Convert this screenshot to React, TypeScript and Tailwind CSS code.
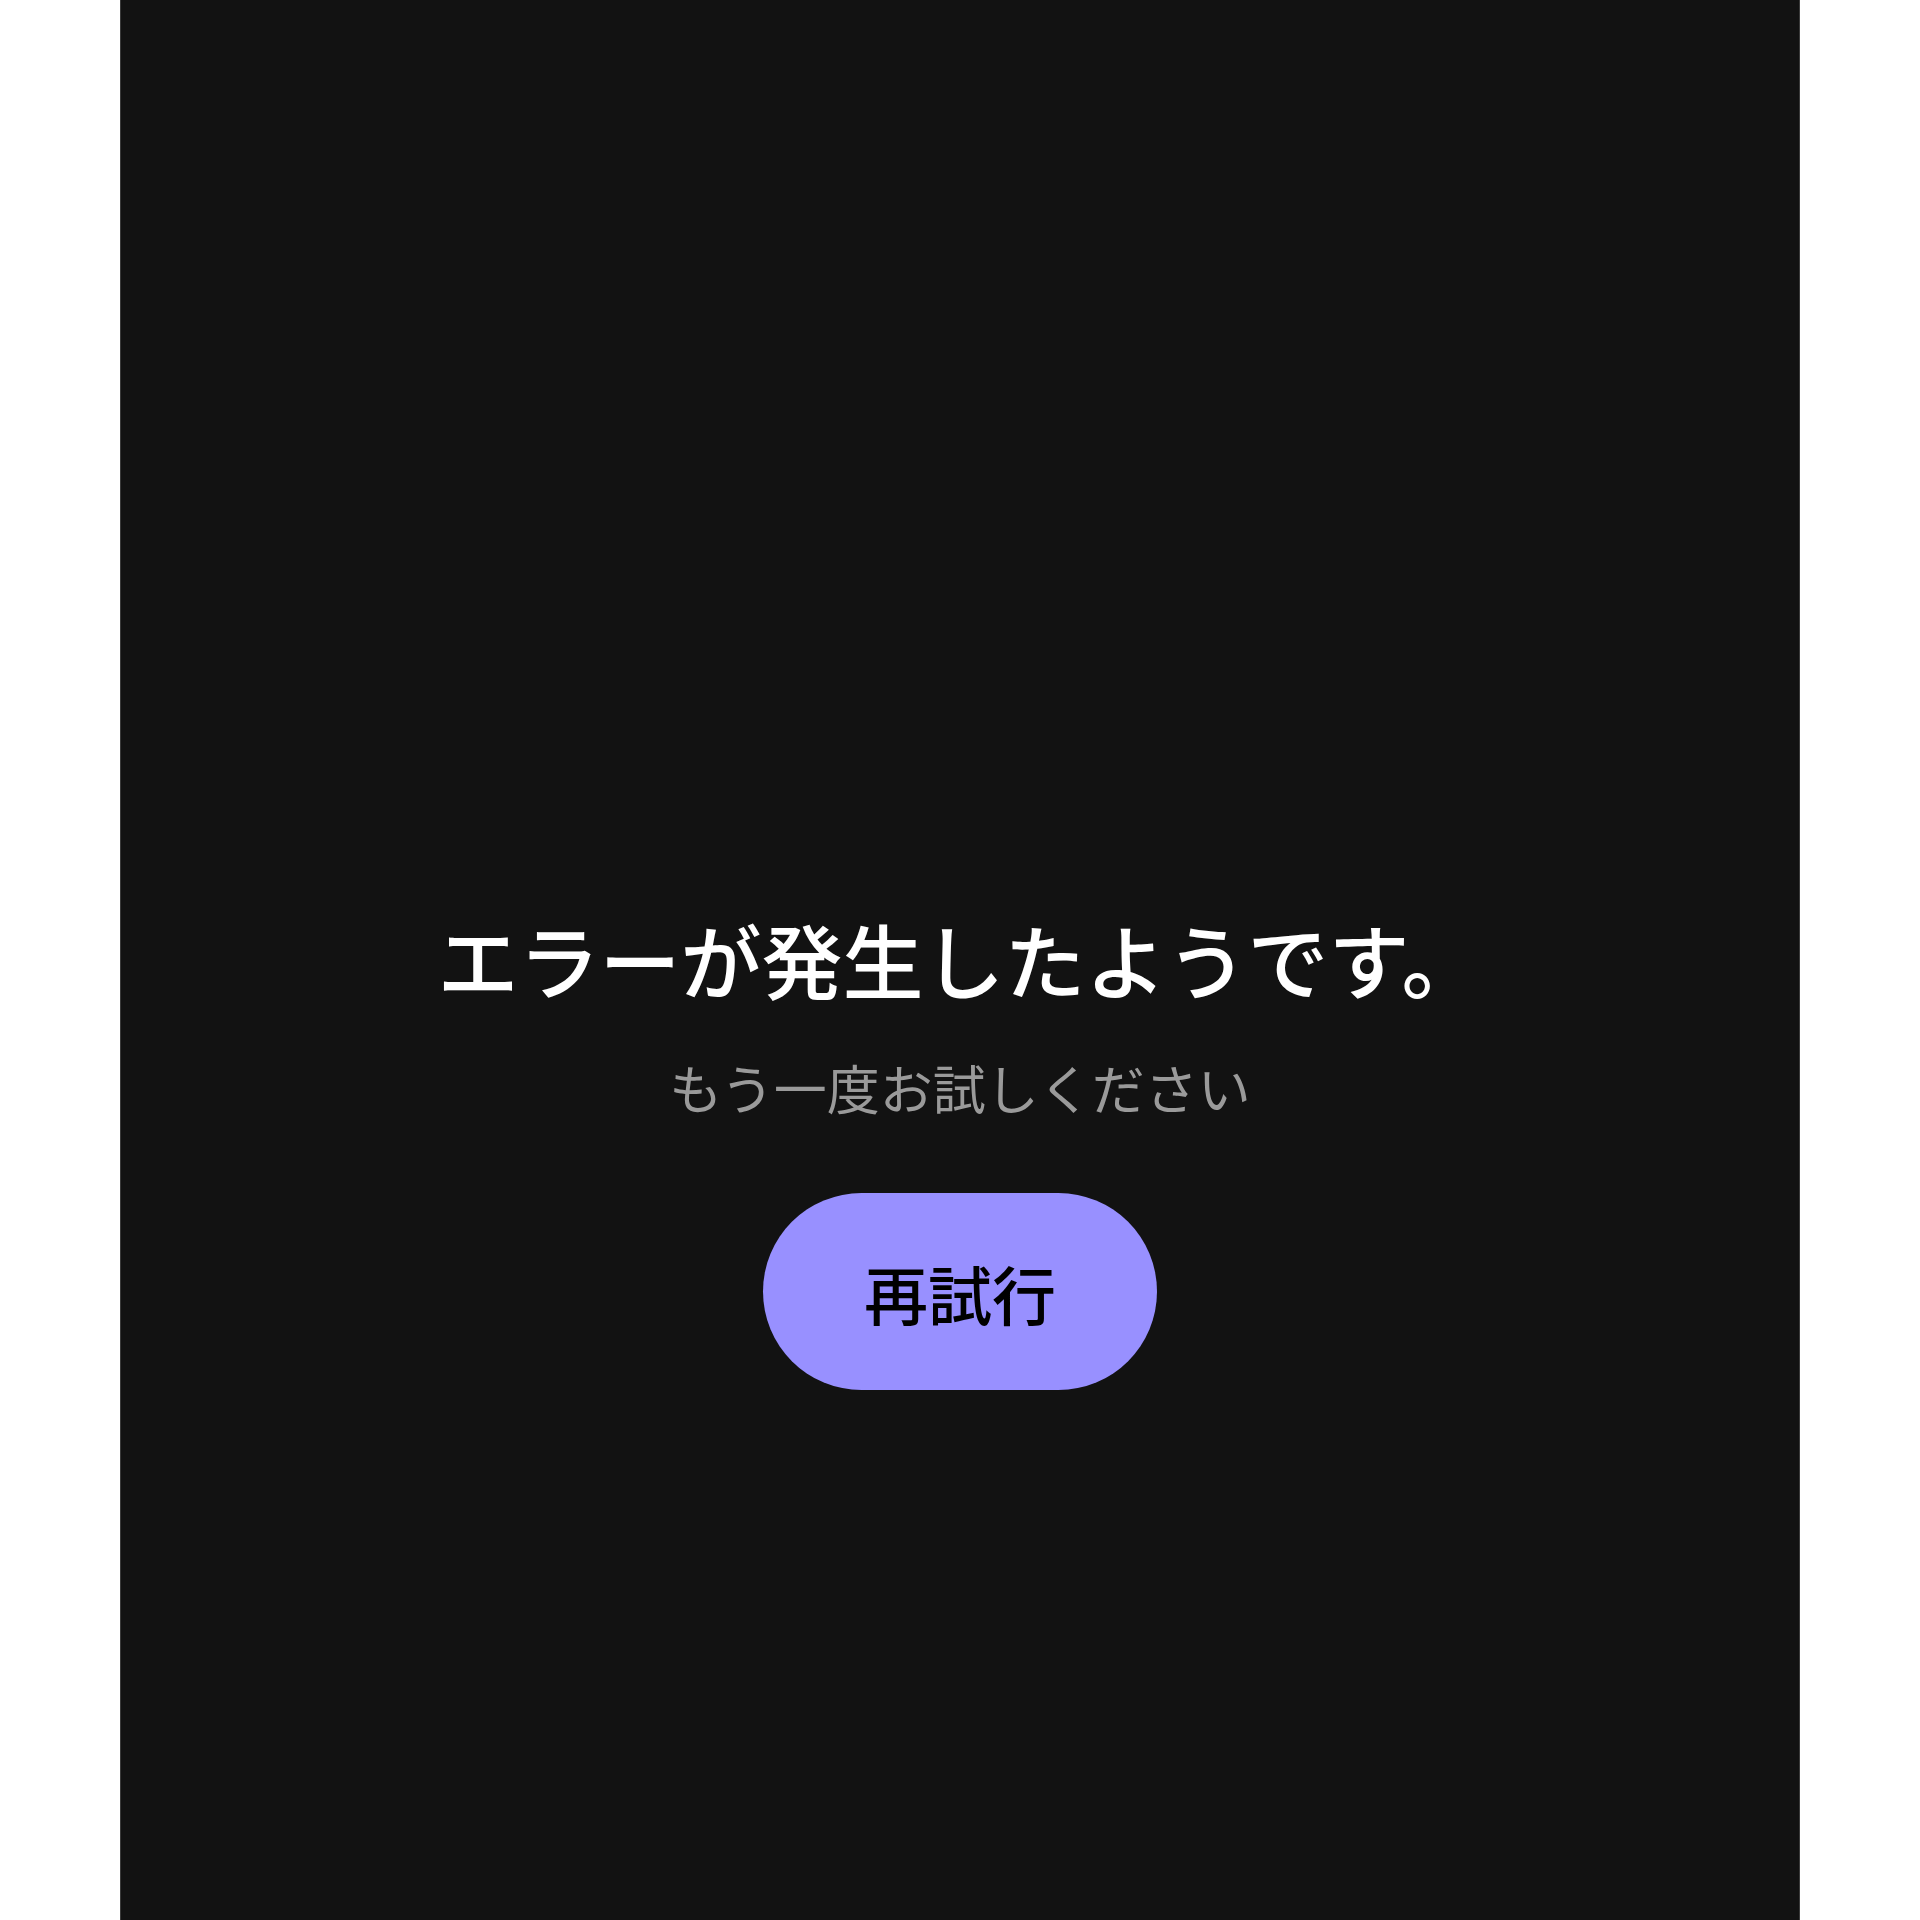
import React from "react";

export default function App() {
  return (
    <div className="w-[1920px] h-[1920px] bg-white flex justify-center">
      <div
        className="w-[1680px] h-[1920px] bg-[#121212] border-x border-[#3a3a3a] flex flex-col items-center pt-[910px]"
        style={{ fontFamily: '"Noto Sans CJK JP", "Noto Sans", sans-serif' }}
      >
        <h1 className="text-[81px] leading-[96px] font-medium text-white">
          エラーが発生したようです。
        </h1>
        <p className="mt-[50px] text-[53px] leading-[62px] text-[#9a9a9a]">
          もう一度お試しください
        </p>
        <button className="mt-[75px] w-[394px] h-[197px] rounded-full bg-[#9890ff] text-black text-[64px] font-medium flex items-center justify-center">
          再試行
        </button>
      </div>
    </div>
  );
}
